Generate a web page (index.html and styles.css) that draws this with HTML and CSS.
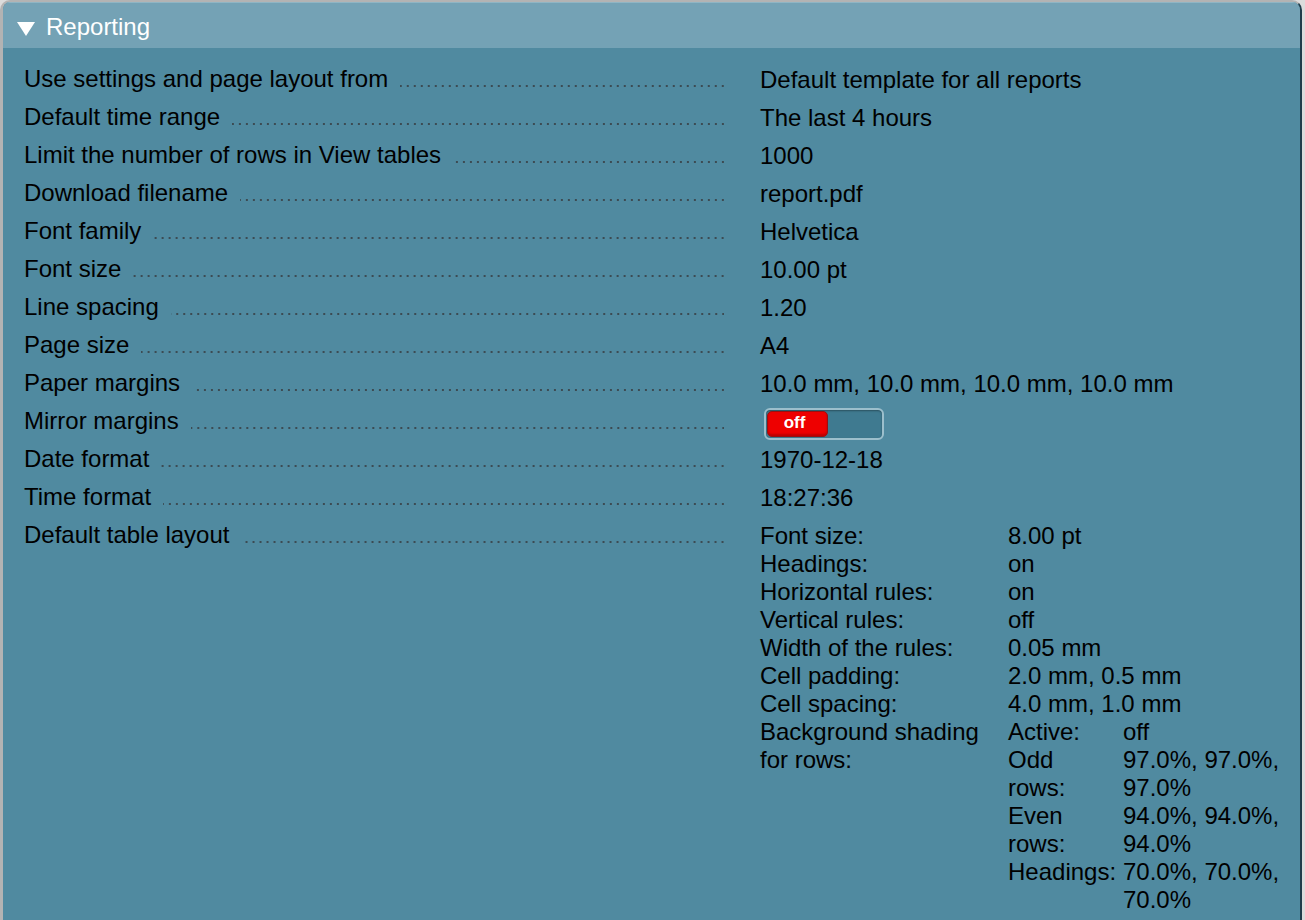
FILE: index.html
```html
<!DOCTYPE html>
<html>
<head>
<meta charset="utf-8">
<link rel="stylesheet" href="styles.css">
</head>
<body>
<div class="panel">
  <div class="head">
    <svg class="tri" width="18" height="14" viewBox="0 0 18 14"><polygon points="0,0 18,0 9,14" fill="#fff"/></svg>
    <span class="title">Reporting</span>
  </div>
  <div class="body">
    <div class="row"><div class="lab"><span>Use settings and page layout from</span><i class="dots"></i></div><div class="val">Default template for all reports</div></div>
    <div class="row"><div class="lab"><span>Default time range</span><i class="dots"></i></div><div class="val">The last 4 hours</div></div>
    <div class="row"><div class="lab"><span>Limit the number of rows in View tables</span><i class="dots"></i></div><div class="val">1000</div></div>
    <div class="row"><div class="lab"><span>Download filename</span><i class="dots"></i></div><div class="val">report.pdf</div></div>
    <div class="row"><div class="lab"><span>Font family</span><i class="dots"></i></div><div class="val">Helvetica</div></div>
    <div class="row"><div class="lab"><span>Font size</span><i class="dots"></i></div><div class="val">10.00 pt</div></div>
    <div class="row"><div class="lab"><span>Line spacing</span><i class="dots"></i></div><div class="val">1.20</div></div>
    <div class="row"><div class="lab"><span>Page size</span><i class="dots"></i></div><div class="val">A4</div></div>
    <div class="row"><div class="lab"><span>Paper margins</span><i class="dots"></i></div><div class="val">10.0 mm, 10.0 mm, 10.0 mm, 10.0 mm</div></div>
    <div class="row"><div class="lab"><span>Mirror margins</span><i class="dots"></i></div><div class="val"><div class="toggle"><div class="knob">off</div></div></div></div>
    <div class="row"><div class="lab"><span>Date format</span><i class="dots"></i></div><div class="val">1970-12-18</div></div>
    <div class="row"><div class="lab"><span>Time format</span><i class="dots"></i></div><div class="val">18:27:36</div></div>
    <div class="row"><div class="lab"><span>Default table layout</span><i class="dots"></i></div>
      <div class="val sub">
        <div class="k">Font size:</div><div class="v">8.00 pt</div>
        <div class="k">Headings:</div><div class="v">on</div>
        <div class="k">Horizontal rules:</div><div class="v">on</div>
        <div class="k">Vertical rules:</div><div class="v">off</div>
        <div class="k">Width of the rules:</div><div class="v">0.05 mm</div>
        <div class="k">Cell padding:</div><div class="v">2.0 mm, 0.5 mm</div>
        <div class="k">Cell spacing:</div><div class="v">4.0 mm, 1.0 mm</div>
        <div class="k">Background shading for rows:</div>
        <div class="v nest">
          <div class="nk">Active:</div><div class="nv">off</div>
          <div class="nk">Odd rows:</div><div class="nv">97.0%, 97.0%, 97.0%</div>
          <div class="nk">Even rows:</div><div class="nv">94.0%, 94.0%, 94.0%</div>
          <div class="nk">Headings:</div><div class="nv">70.0%, 70.0%, 70.0%</div>
        </div>
      </div>
    </div>
  </div>
</div>
</body>
</html>
```
FILE: styles.css
```css
html, body {
  margin: 0;
  padding: 0;
  background: #dcdcdc;
  height: 100%;
  overflow: hidden;
}
.panel {
  margin-right: 3px;
  min-height: 940px;
  border-left: 3px solid #b3b3b3;
  border-top: 2px solid #b3b3b3;
  border-right: 2px solid #1f3d4b;
  border-radius: 10px 10px 0 0;
  background: #508aa0;
  font-family: "Liberation Sans", Arial, sans-serif;
  font-size: 24px;
  color: #000;
  overflow: hidden;
}
.head {
  height: 46px;
  background: #74a2b5;
  display: flex;
  align-items: center;
  padding: 3px 0 0 14px;
  border-top: 1px solid #8fb5c4;
  box-sizing: border-box;
}
.tri {
  display: block;
  margin-top: 3px;
}
.title {
  color: #fff;
  margin-left: 11px;
  line-height: 28px;
}
.body {
  padding: 13px 0 0 21px;
}
.row {
  display: grid;
  grid-template-columns: 700px 1fr;
  column-gap: 36px;
  min-height: 38px;
}
.lab {
  display: flex;
  align-items: flex-end;
  height: 35px;
  line-height: 34px;
  white-space: nowrap;
}
.dots {
  flex: 1;
  margin-left: 12px;
  height: 2px;
  margin-bottom: 9px;
  background-image: linear-gradient(to right, transparent 5px, #3c4b53 5px);
  background-size: 7px 2px;
  background-repeat: repeat-x;
  background-position: right bottom;
}
.val {
  line-height: 38px;
}
.toggle {
  margin: 5px 0 0 4px;
  width: 120px;
  height: 32px;
  box-sizing: border-box;
  border: 2px solid #9cbfcc;
  border-radius: 6px;
  background: #3f7a90;
  padding: 1px;
  box-shadow: inset 0 1px 2px rgba(0,0,0,0.35);
}
.knob {
  width: 61px;
  height: 26px;
  box-sizing: border-box;
  background: #ee0000;
  border: 1px solid #9a1010;
  border-radius: 5px;
  color: #fff;
  font-weight: bold;
  font-size: 17px;
  line-height: 22px;
  padding-right: 6px;
  text-align: center;
  box-shadow: inset 0 -2px 2px rgba(120,0,0,0.4);
}
.sub {
  display: grid;
  grid-template-columns: 240px auto;
  column-gap: 8px;
  line-height: 28px;
  padding-top: 5px;
  padding-bottom: 20px;
}
.nest {
  display: grid;
  grid-template-columns: 108px 168px;
  column-gap: 7px;
}
```
